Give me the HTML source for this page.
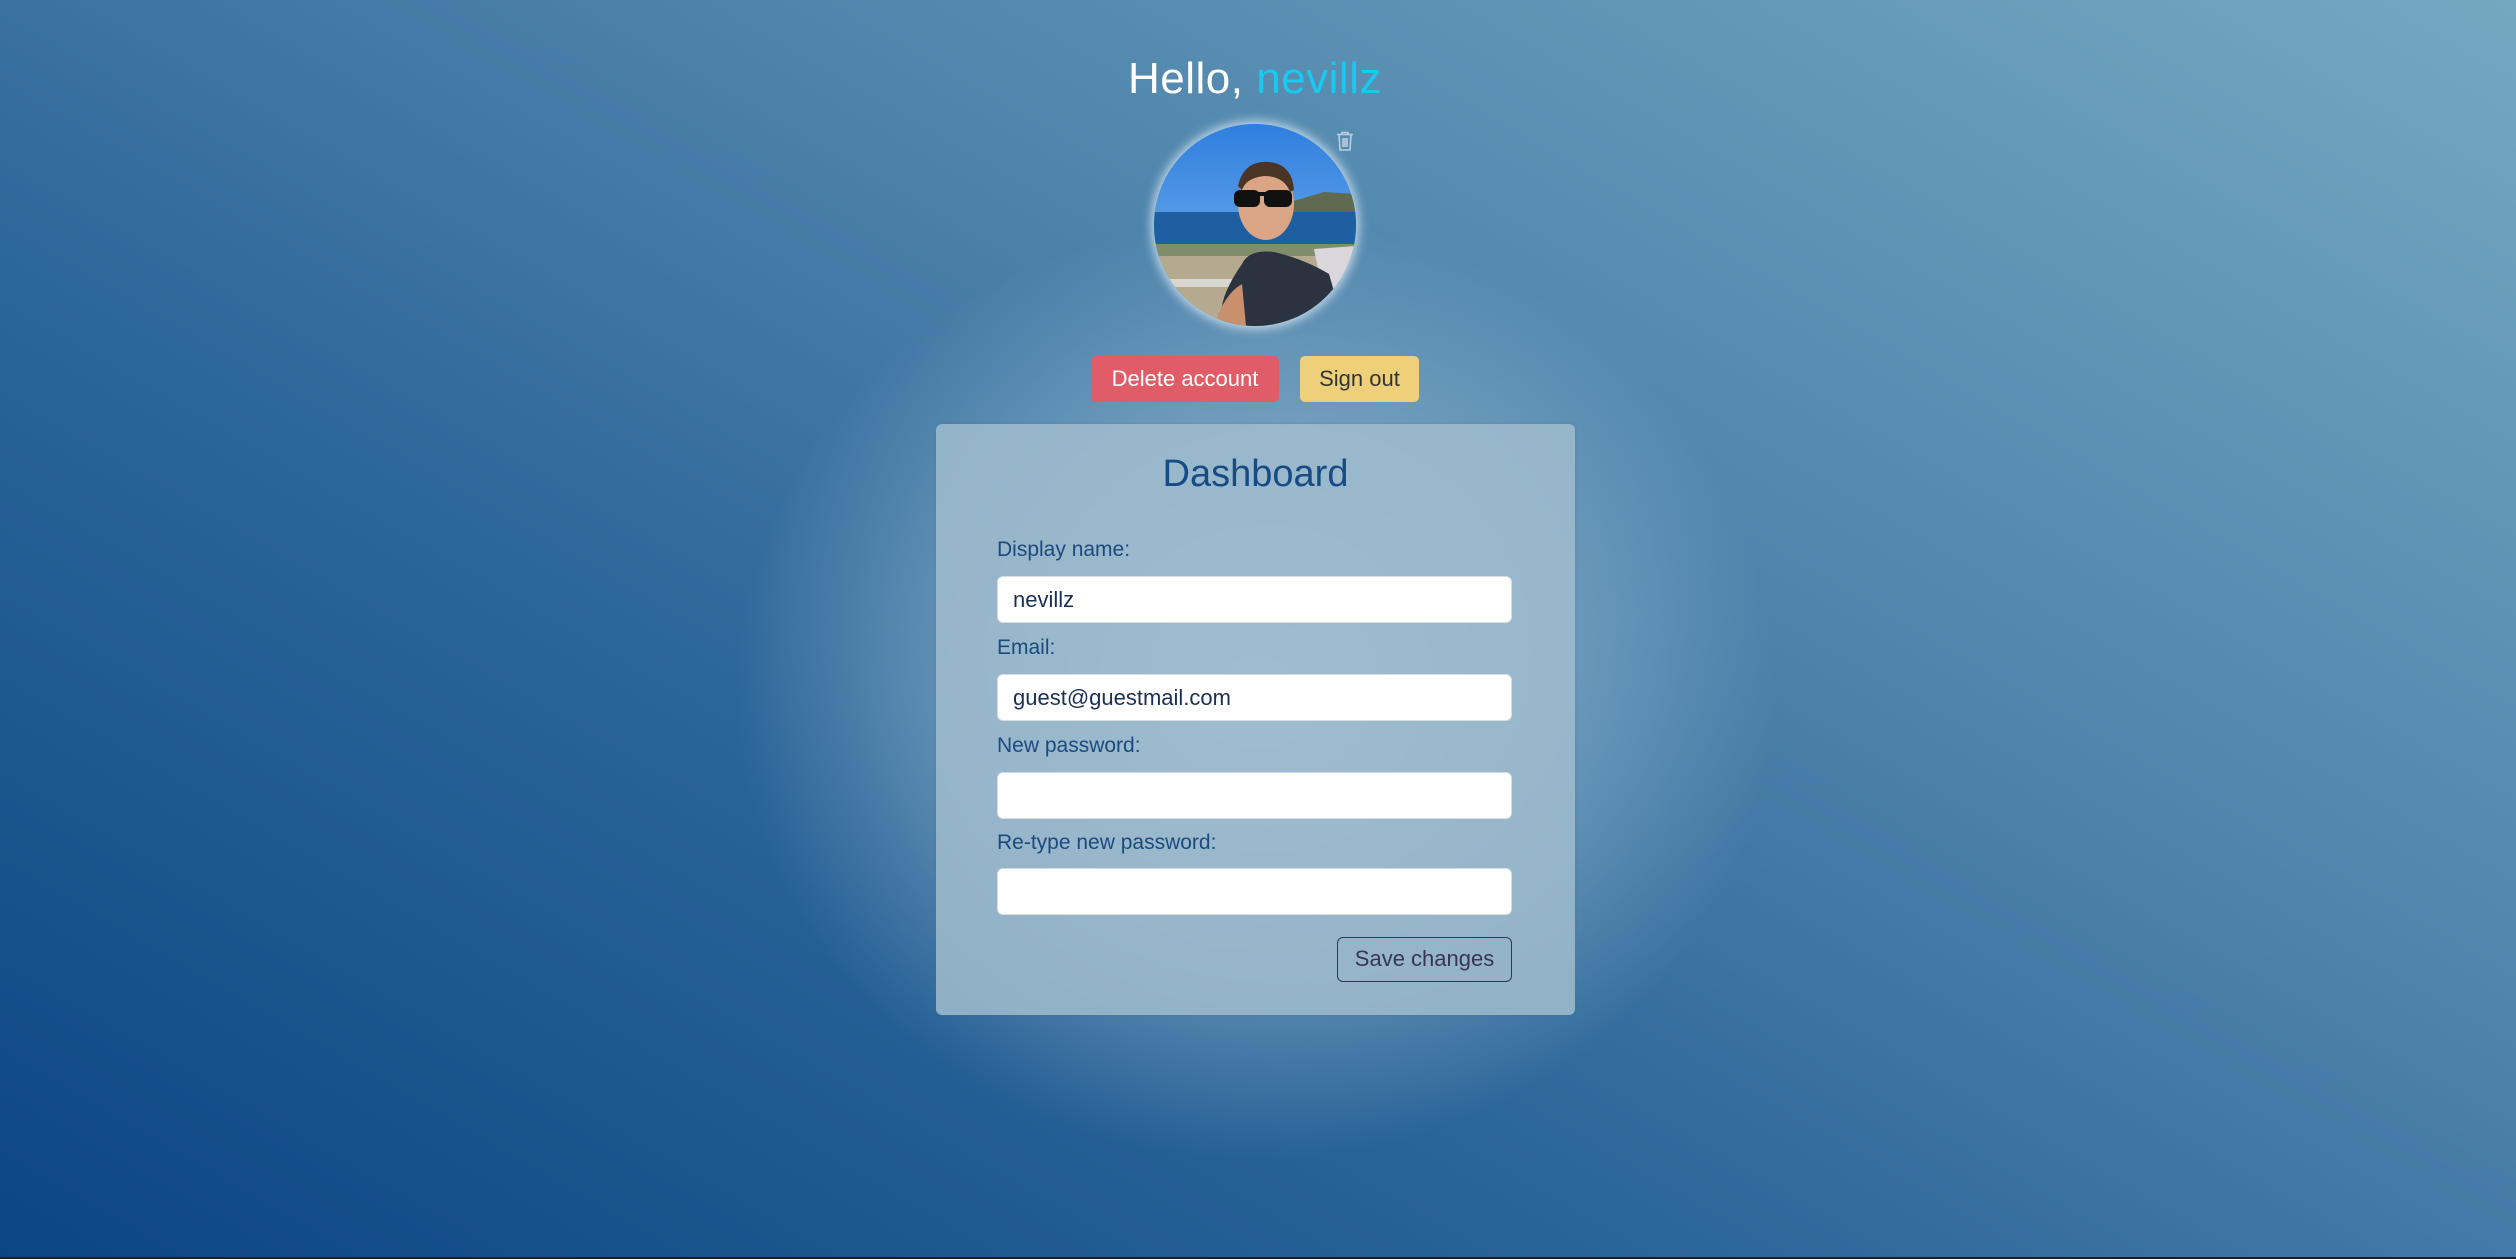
<!DOCTYPE html>
<html><head><meta charset="utf-8">
<style>
html,body{margin:0;padding:0;width:2516px;height:1259px;overflow:hidden}
body{position:relative;font-family:"Liberation Sans",sans-serif;
background:
radial-gradient(ellipse 520px 470px at 1255px 690px, rgba(200,220,232,0.75) 0%, rgba(175,203,222,0.5) 45%, rgba(150,185,210,0) 100%),
linear-gradient(30deg,#0c4584 0%,#2a6598 35%,#5287ae 65%,#74a8c1 100%);}
.abs{position:absolute}
h1{position:absolute;left:0;width:2510px;top:54px;margin:0;text-align:center;font-weight:normal;font-size:44px;color:#fff;letter-spacing:0.5px}
h1 span{color:#19c9ef}
.avatar{left:1154px;top:124px;width:202px;height:202px;border-radius:50%;overflow:hidden;box-shadow:0 0 10px 3px rgba(220,235,245,0.8)}
.btn{position:absolute;height:46px;border-radius:5px;font-size:22px;line-height:46px;text-align:center}
.card{left:936px;top:424px;width:639px;height:591px;border-radius:6px;background:rgba(160,188,206,0.85);box-shadow:0 0 3px rgba(80,110,140,0.4)}
.card h2{position:absolute;left:0;right:0;top:29px;margin:0;text-align:center;font-weight:normal;font-size:38px;color:#164b84}
.lbl{position:absolute;left:61px;font-size:21px;color:#1c4a80}
.inp{position:absolute;left:61px;width:515px;height:47px;background:#fff;border-radius:6px;box-sizing:border-box;border:1px solid #d8dde3;font-size:22px;color:#1a2f55;line-height:45px;padding-left:15px}
.save{position:absolute;left:401px;top:513px;width:175px;height:45px;border:1.5px solid #3b2f5e;border-radius:6px;box-sizing:border-box;font-size:22px;line-height:42px;text-align:center;color:#3a3558}
</style></head><body>
<h1>Hello, <span>nevillz</span></h1>
<div class="abs avatar">
<svg width="202" height="202" viewBox="0 0 202 202">
<defs><linearGradient id="sky" x1="0" y1="0" x2="0" y2="1"><stop offset="0" stop-color="#2f7fe0"/><stop offset="1" stop-color="#7fb8ec"/></linearGradient></defs>
<rect width="202" height="202" fill="url(#sky)"/>
<path d="M130 80 L170 68 L202 70 L202 105 L130 105Z" fill="#5f6a4e"/>
<rect y="88" width="202" height="40" fill="#1d5fa0"/>
<rect y="120" width="202" height="14" fill="#7f8d6a"/>
<rect y="132" width="202" height="70" fill="#b5a98f"/>
<rect y="155" width="120" height="8" fill="#d8d8d0"/>
<path d="M160 125 L202 122 L202 175 L170 175Z" fill="#d9d6dc"/>
<path d="M88 140 Q95 125 120 128 Q150 135 175 150 L190 202 L70 202 Q60 180 88 140Z" fill="#2b3240"/>
<ellipse cx="112" cy="80" rx="28" ry="36" fill="#d9a585"/>
<path d="M84 62 Q90 36 115 38 Q138 40 140 66 L136 68 Q130 52 110 52 Q92 54 88 66Z" fill="#4a3426"/>
<rect x="80" y="66" width="26" height="17" rx="6" fill="#111"/>
<rect x="110" y="66" width="28" height="17" rx="6" fill="#111"/>
<rect x="100" y="68" width="14" height="4" fill="#111"/>
<path d="M60 202 Q70 170 88 160 L92 202Z" fill="#c9906e"/>
</svg></div>
<svg class="abs" style="left:1335px;top:130px" width="20" height="22" viewBox="0 0 20 22" fill="none" stroke="#b9cfe0" stroke-width="1.6">
<path d="M2 4.5H18M7 4.5V2.5H13V4.5M4 4.5L5 20H15L16 4.5M8 8V17M10 8V17M12 8V17"/></svg>
<div class="btn" style="left:1091px;top:356px;width:188px;background:#e05d68;color:#fff">Delete account</div>
<div class="btn" style="left:1300px;top:356px;width:119px;background:#efd07a;color:#333">Sign out</div>
<div class="abs card">
<h2>Dashboard</h2>
<div class="lbl" style="top:114px">Display name:</div>
<div class="inp" style="top:152px">nevillz</div>
<div class="lbl" style="top:212px">Email:</div>
<div class="inp" style="top:250px">guest@guestmail.com</div>
<div class="lbl" style="top:310px">New password:</div>
<div class="inp" style="top:348px"></div>
<div class="lbl" style="top:407px">Re-type new password:</div>
<div class="inp" style="top:444px"></div>
<div class="save">Save changes</div>
</div>
<div class="abs" style="left:0;top:1257px;width:2516px;height:2px;background:#1a1f2a"></div>
</body></html>
